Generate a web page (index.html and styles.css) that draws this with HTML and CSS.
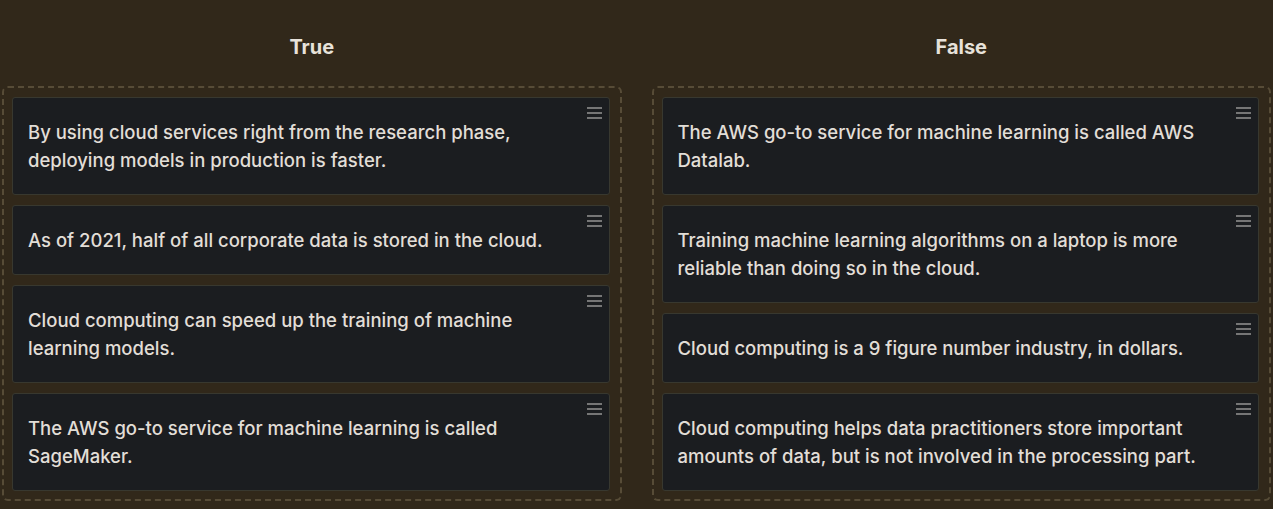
FILE: index.html
```html
<!DOCTYPE html>
<html>
<head>
<meta charset="utf-8">
<link rel="stylesheet" href="styles.css">
</head>
<body>
<div class="board">
  <section class="column">
    <h2 class="title">True</h2>
    <div class="zone">
      <div class="card"><p>By using cloud services right from the research phase, deploying models in production is faster.</p><span class="grip"></span></div>
      <div class="card"><p>As of 2021, half of all corporate data is stored in the cloud.</p><span class="grip"></span></div>
      <div class="card"><p>Cloud computing can speed up the training of machine learning models.</p><span class="grip"></span></div>
      <div class="card"><p>The AWS go-to service for machine learning is called SageMaker.</p><span class="grip"></span></div>
    </div>
  </section>
  <section class="column">
    <h2 class="title">False</h2>
    <div class="zone">
      <div class="card"><p>The AWS go-to service for machine learning is called AWS Datalab.</p><span class="grip"></span></div>
      <div class="card"><p>Training machine learning algorithms on a laptop is more reliable than doing so in the cloud.</p><span class="grip"></span></div>
      <div class="card"><p>Cloud computing is a 9 figure number industry, in dollars.</p><span class="grip"></span></div>
      <div class="card"><p>Cloud computing helps data practitioners store important amounts of data, but is not involved in the processing part.</p><span class="grip"></span></div>
    </div>
  </section>
</div>
</body>
</html>
```
FILE: styles.css
```css
html, body {
  margin: 0;
  padding: 0;
  background: #31281a;
  height: 100%;
}
body {
  font-family: "Inter", "Noto Sans", sans-serif;
  color: #e2ded7;
}
.board {
  display: grid;
  grid-template-columns: 1fr 1fr;
  column-gap: 30px;
  padding: 0 2px;
}
.column {
  display: flex;
  flex-direction: column;
}
.title {
  margin: 0;
  height: 86px;
  display: flex;
  align-items: center;
  justify-content: center;
  font-size: 20px;
  font-weight: 700;
  color: #e7e2da;
  padding-top: 8px;
  box-sizing: border-box;
}
.zone {
  border: 2px dashed #574c37;
  border-radius: 6px;
  padding: 9px 10px 8px 8px;
  display: flex;
  flex-direction: column;
  gap: 10px;
}
.card {
  position: relative;
  background: #1b1d20;
  border: 1px solid #38382f;
  border-radius: 3px;
  padding: 20px 50px 20px 15px;
}
.card p {
  margin: 0;
  font-size: 18.5px;
  line-height: 28px;
  font-weight: 500;
}
.grip {
  position: absolute;
  top: 9px;
  right: 7px;
  width: 15px;
  height: 12px;
  background:
    linear-gradient(#767676, #767676) 0 0 / 100% 2px no-repeat,
    linear-gradient(#767676, #767676) 0 5px / 100% 2px no-repeat,
    linear-gradient(#767676, #767676) 0 10px / 100% 2px no-repeat;
}
```
